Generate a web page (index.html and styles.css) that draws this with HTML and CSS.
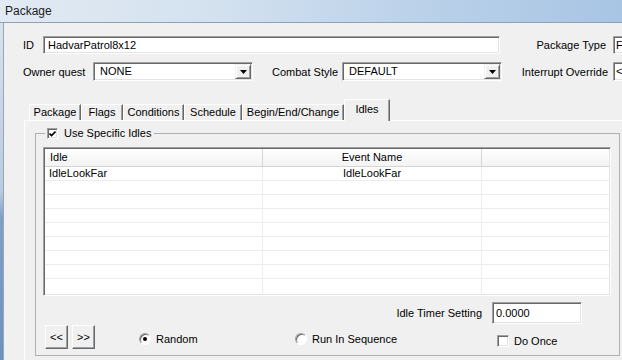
FILE: index.html
```html
<!DOCTYPE html>
<html lang="en">
<head>
    <meta charset="UTF-8">
    <title>Package</title>
    <link rel="stylesheet" href="styles.css">
</head>
<body>
    <div class="titlebar">Package</div>
    <div class="window">
        <!-- top fields -->
        <div class="row row-top">
            <label class="lbl lbl-id">ID</label>
            <div class="field f-id">HadvarPatrol8x12</div>
            <label class="lbl lbl-right lbl-type">Package Type</label>
            <div class="field f-cut">F</div>
        </div>
        <div class="row row-mid">
            <label class="lbl lbl-owner">Owner quest</label>
            <div class="combo c-owner">
                <span class="combo-text">NONE</span>
                <span class="drop"><svg width="7" height="4"><path d="M0 0h7L3.5 4z"/></svg></span>
            </div>
            <label class="lbl lbl-right lbl-combat">Combat Style</label>
            <div class="combo c-combat">
                <span class="combo-text">DEFAULT</span>
                <span class="drop"><svg width="7" height="4"><path d="M0 0h7L3.5 4z"/></svg></span>
            </div>
            <label class="lbl lbl-right lbl-int">Interrupt Override</label>
            <div class="combo c-cut"><span class="combo-text">&lt;</span></div>
        </div>

        <!-- tabs -->
        <div class="tabs">
            <span class="tab tab-package">Package</span>
            <span class="tab tab-flags">Flags</span>
            <span class="tab tab-cond">Conditions</span>
            <span class="tab tab-sched">Schedule</span>
            <span class="tab tab-begin">Begin/End/Change</span>
            <span class="tab tab-idles active">Idles</span>
        </div>
        <div class="panel">
            <fieldset class="group">
                <legend class="legend">
                    <span class="check"><svg width="7" height="7"><path d="M0.5 3.5L2.5 5.5L6.5 1.5" fill="none" stroke="#000" stroke-width="1.6"/></svg></span>
                    Use Specific Idles
                </legend>
                <div class="list">
                    <div class="list-head">
                        <span class="col c1">Idle</span>
                        <span class="col c2">Event Name</span>
                        <span class="col c3"></span>
                    </div>
                    <div class="list-row">
                        <span class="col c1">IdleLookFar</span>
                        <span class="col c2">IdleLookFar</span>
                        <span class="col c3"></span>
                    </div>
                    <div class="list-row"><span class="col c1"></span><span class="col c2"></span><span class="col c3"></span></div>
                    <div class="list-row"><span class="col c1"></span><span class="col c2"></span><span class="col c3"></span></div>
                    <div class="list-row"><span class="col c1"></span><span class="col c2"></span><span class="col c3"></span></div>
                    <div class="list-row"><span class="col c1"></span><span class="col c2"></span><span class="col c3"></span></div>
                    <div class="list-row"><span class="col c1"></span><span class="col c2"></span><span class="col c3"></span></div>
                    <div class="list-row"><span class="col c1"></span><span class="col c2"></span><span class="col c3"></span></div>
                    <div class="list-row"><span class="col c1"></span><span class="col c2"></span><span class="col c3"></span></div>
                    <div class="list-row last"><span class="col c1"></span><span class="col c2"></span><span class="col c3"></span></div>
                </div>
                <div class="timer-row">
                    <label class="lbl">Idle Timer Setting</label>
                    <div class="field f-timer">0.0000</div>
                </div>
                <div class="bottom-row">
                    <span class="btn">&lt;&lt;</span>
                    <span class="btn btn-next">&gt;&gt;</span>
                    <span class="opt opt-random"><span class="radio on"></span>Random</span>
                    <span class="opt opt-seq"><span class="radio"></span>Run In Sequence</span>
                    <span class="opt opt-once"><span class="check"></span>Do Once</span>
                </div>
            </fieldset>
        </div>
    </div>
</body>
</html>
```

FILE: styles.css
```css
body {
    margin: 0;
    width: 622px;
    height: 360px;
    overflow: hidden;
    background: #f0f0f0;
    font-family: "Liberation Sans", Arial, sans-serif;
    font-size: 11px;
    color: #000;
}
.titlebar {
    height: 22px;
    line-height: 22px;
    padding-left: 5px;
    font-size: 12px;
    color: #1b1b1b;
    background: linear-gradient(90deg, #e2eaf3 0%, #d3e1ef 35%, #b9d0e9 70%, #a8c5e4 100%);
}
.window {
    box-sizing: border-box;
    height: 338px;
    border-top: 1px solid #8ea1b7;
    padding: 13px 0 0 23px;
    overflow: hidden;
    background:
        linear-gradient(#9aa5b1, #9aa5b1) 3px 0 / 1px 100% no-repeat,
        linear-gradient(#d6e2ee, #b8cbe0 50%, #7da0c7 58%, #6b93c0) 0 0 / 3px 100% no-repeat,
        #f0f0f0;
}
.row {
    display: flex;
    align-items: center;
}
.row-top {
    height: 18px;
}
.row-mid {
    height: 19px;
    margin-top: 8px;
}
.lbl {
    flex-shrink: 0;
    white-space: nowrap;
}
.lbl-right {
    text-align: right;
}
.lbl-id { width: 20px; }
.lbl-type { width: 106px; margin-right: 7px; }
.lbl-owner { width: 70px; }
.lbl-combat { width: 85px; margin-right: 4px; }
.lbl-int { width: 106px; margin-right: 5px; }

.field {
    box-sizing: border-box;
    flex-shrink: 0;
    height: 18px;
    line-height: 16px;
    padding-left: 4px;
    background: #fff;
    border: 1px solid;
    border-color: #a0a0a0 #fff #fff #a0a0a0;
    box-shadow: inset 1px 1px 0 #696969, inset -1px -1px 0 #e3e3e3;
    white-space: nowrap;
    overflow: hidden;
}
.f-id { width: 457px; }
.f-cut { width: 40px; padding-left: 2px; }
.f-timer {
    width: 90px;
    height: 22px;
    line-height: 20px;
    padding-left: 3px;
}

.combo {
    box-sizing: border-box;
    flex-shrink: 0;
    display: flex;
    height: 19px;
    padding: 1px;
    background: #fff;
    border: 1px solid;
    border-color: #a0a0a0 #fff #fff #a0a0a0;
    box-shadow: inset 1px 1px 0 #696969, inset -1px -1px 0 #e3e3e3;
}
.c-owner, .c-combat { width: 160px; }
.c-cut { width: 40px; }
.combo-text {
    flex: 1;
    padding-left: 5px;
    line-height: 15px;
}
.c-cut .combo-text { padding-left: 1px; }
.drop {
    box-sizing: border-box;
    width: 16px;
    height: 15px;
    display: flex;
    align-items: center;
    justify-content: center;
    background: #f0f0f0;
    border: 1px solid;
    border-color: #f0f0f0 #696969 #696969 #f0f0f0;
    box-shadow: inset 1px 1px 0 #fff, inset -1px -1px 0 #a0a0a0;
}

/* tabs */
.tabs {
    position: relative;
    z-index: 1;
    display: flex;
    align-items: flex-end;
    height: 22px;
    margin: 18px 0 -1px 6px;
}
.tab {
    box-sizing: border-box;
    height: 16px;
    margin-bottom: 1px;
    line-height: 15px;
    text-align: center;
    white-space: nowrap;
    background: #f0f0f0;
    border-top: 1px solid #fff;
    border-left: 1px solid #fff;
    border-right: 1px solid #696969;
    box-shadow: inset -1px 0 0 #a0a0a0;
}
.tab.active {
    height: 22px;
    margin-bottom: 0;
    padding-top: 2px;
}
.tab-package { width: 52px; }
.tab-flags { width: 42px; }
.tab-cond { width: 61px; }
.tab-sched { width: 58px; }
.tab-begin { width: 102px; }
.tab-idles { width: 46px; }

.panel {
    height: 260px;
    margin-left: 1px;
    border-top: 1px solid #fff;
    border-left: 1px solid #fff;
}

/* group box */
.group {
    box-sizing: border-box;
    width: 585px;
    margin: 6px 0 0 10px;
    padding: 0 0 6px 0;
    border: 1px solid #b0b0b0;
}
.legend {
    display: flex;
    align-items: center;
    height: 12px;
    line-height: 12px;
    margin-left: 9px;
    padding: 0 3px 0 2px;
}
.check {
    box-sizing: border-box;
    width: 12px;
    height: 12px;
    margin-right: 5px;
    display: flex;
    align-items: center;
    justify-content: center;
    background: #fff;
    border: 1px solid;
    border-color: #a0a0a0 #fff #fff #a0a0a0;
    box-shadow: inset 1px 1px 0 #696969, inset -1px -1px 0 #e3e3e3;
}
.legend .check {
    width: 11px;
    height: 11px;
    margin-right: 6px;
}

/* list view */
.list {
    box-sizing: border-box;
    width: 568px;
    height: 149px;
    margin: 8px 0 0 7px;
    padding: 1px;
    overflow: hidden;
    background: #fff;
    border: 1px solid;
    border-color: #a0a0a0 #fff #fff #a0a0a0;
    box-shadow: inset 1px 1px 0 #696969, inset -1px -1px 0 #e3e3e3;
}
.list-head {
    display: flex;
    box-sizing: border-box;
    height: 18px;
    line-height: 17px;
    border-bottom: 1px solid #d5d5d5;
    background: linear-gradient(#fff, #f3f3f3);
}
.list-row {
    display: flex;
    box-sizing: border-box;
    height: 14px;
    line-height: 13px;
    border-bottom: 1px solid #ececec;
}
.list-row.last {
    border-bottom: none;
}
.col {
    box-sizing: border-box;
    white-space: nowrap;
    overflow: hidden;
}
.c1 {
    width: 218px;
    padding-left: 4px;
    border-right: 1px solid #ececec;
}
.c2 {
    width: 219px;
    text-align: center;
    border-right: 1px solid #ececec;
}
.c3 {
    flex: 1;
}
.list-head .c1 {
    padding-left: 5px;
    border-right-color: #d5d5d5;
}
.list-head .c2 {
    border-right-color: #d5d5d5;
}

.timer-row {
    display: flex;
    justify-content: flex-end;
    align-items: center;
    height: 22px;
    margin: 6px 37px 0 0;
}
.timer-row .lbl {
    margin-right: 10px;
}

.bottom-row {
    display: flex;
    align-items: flex-start;
    margin: 1px 0 0 9px;
}
.btn {
    box-sizing: border-box;
    width: 23px;
    height: 24px;
    display: flex;
    align-items: center;
    justify-content: center;
    background: #f0f0f0;
    border: 1px solid;
    border-color: #fff #696969 #696969 #fff;
    box-shadow: inset -1px -1px 0 #a0a0a0;
}
.btn-next {
    margin-left: 4px;
}
.opt {
    display: flex;
    align-items: center;
    height: 12px;
    line-height: 12px;
    white-space: nowrap;
}
.opt-random {
    width: 156px;
    margin: 8px 0 0 44px;
}
.opt-seq {
    width: 202px;
    margin-top: 8px;
}
.opt-once {
    margin-top: 10px;
}
.radio {
    position: relative;
    box-sizing: border-box;
    width: 12px;
    height: 12px;
    margin-right: 5px;
    border-radius: 50%;
    background: #fff;
    border: 1px solid;
    border-color: #a0a0a0 #fff #fff #a0a0a0;
    box-shadow: inset 1px 1px 0 #696969;
}
.radio.on::after {
    content: "";
    position: absolute;
    left: 3px;
    top: 3px;
    width: 4px;
    height: 4px;
    border-radius: 50%;
    background: #000;
}
```
